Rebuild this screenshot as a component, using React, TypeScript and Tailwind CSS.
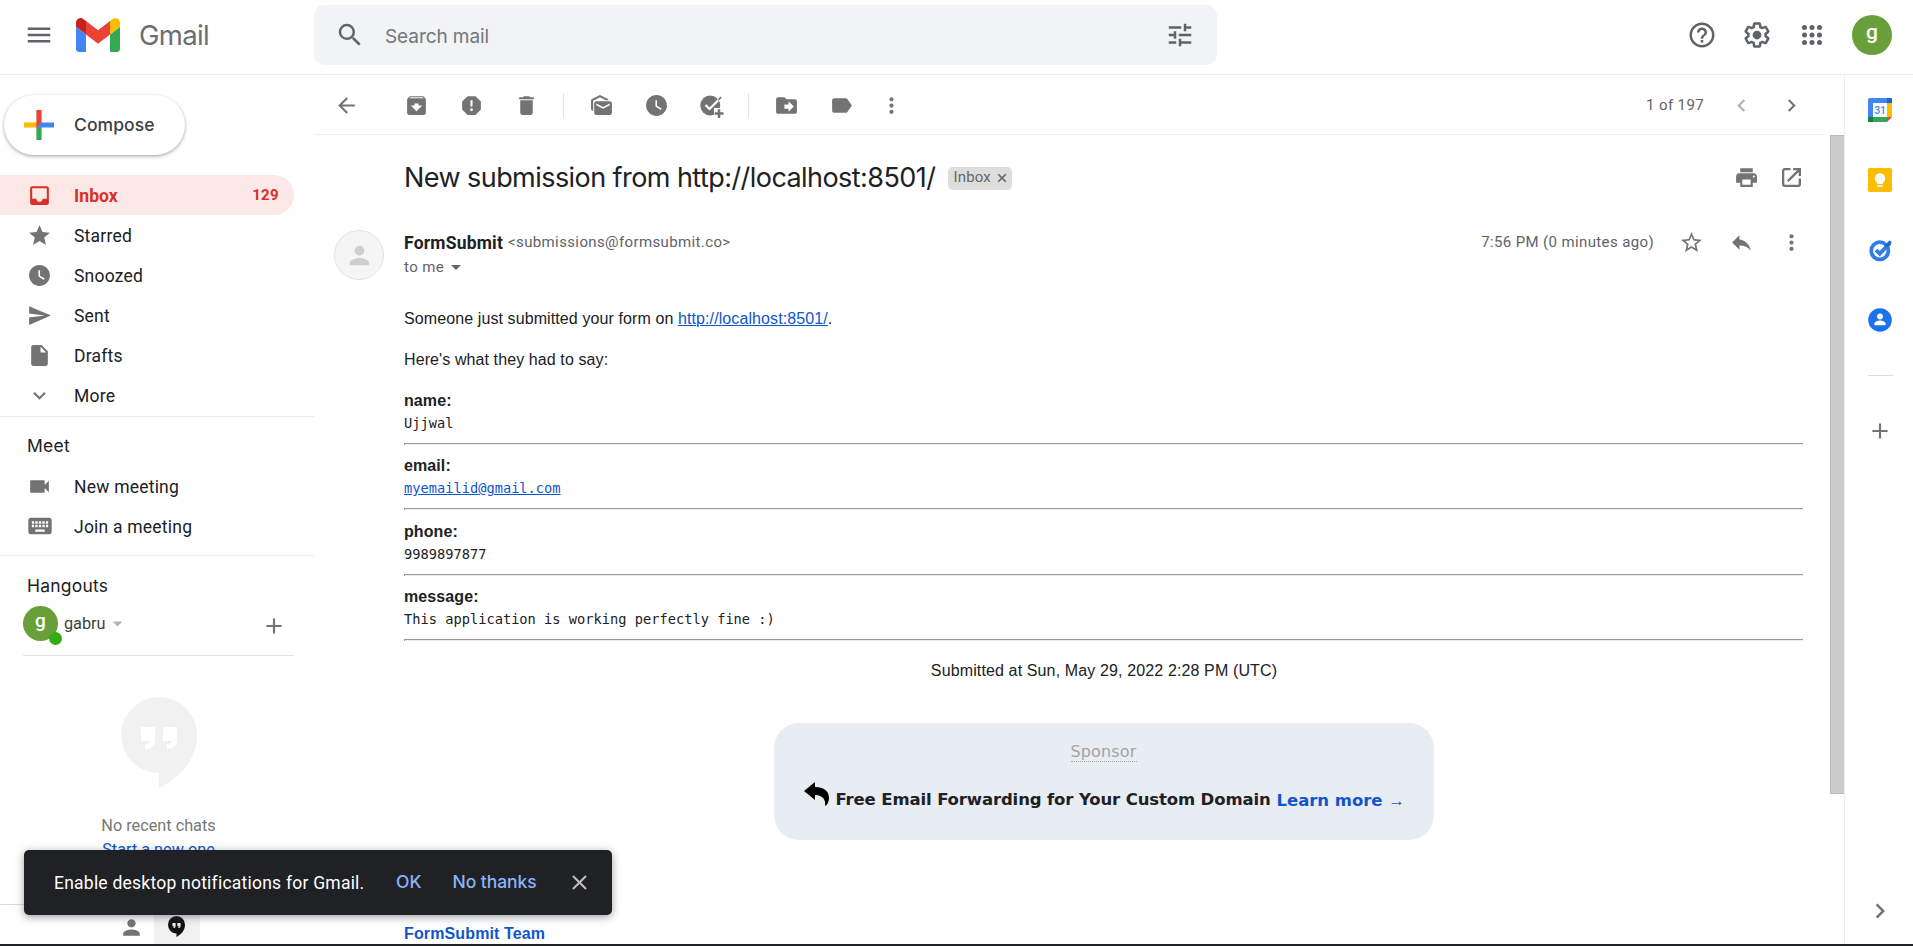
import type { ReactNode } from "react";
import type { IconType } from "react-icons";
import {
  MdAdd, MdArchive, MdArrowBack, MdArrowDropDown, MdChevronLeft, MdChevronRight, MdClose, MdDelete,
  MdDriveFileMove, MdExpandMore, MdHelpOutline, MdInbox, MdInsertDriveFile, MdKeyboard, MdLabel, MdMarkAsUnread,
  MdMenu, MdMoreVert, MdPerson, MdPrint, MdReply, MdReport, MdSearch, MdSend,
  MdStar, MdStarBorder, MdTune, MdVideocam, MdWatchLater,
} from "react-icons/md";

const RB = "font-['Roboto',sans-serif]";
const GS = "font-['Inter',sans-serif]";

function GmailLogo() {
  return (
    <svg width="44" height="34" viewBox="52 42 88 66" preserveAspectRatio="none">
      <path fill="#4285f4" d="M58 108h14V74L52 59v43c0 3.32 2.69 6 6 6" />
      <path fill="#34a853" d="M120 108h14c3.32 0 6-2.69 6-6V59l-20 15" />
      <path fill="#fbbc04" d="M120 48v26l20-15v-8c0-7.42-8.47-11.65-14.4-7.2" />
      <path fill="#ea4335" d="M72 74V48l24 18 24-18v26L96 92" />
      <path fill="#c5221f" d="M52 51v8l20 15V48l-5.6-4.2c-5.94-4.45-14.4-.22-14.4 7.2" />
    </svg>
  );
}

function SettingsIcon() {
  return (
    <svg width="30" height="30" viewBox="0 0 24 24" fill="currentColor">
      <path d="M13.85 22.25h-3.7c-.74 0-1.36-.54-1.45-1.27l-.27-1.89c-.27-.14-.53-.29-.79-.46l-1.8.72c-.7.26-1.47-.03-1.81-.65L2.2 15.53c-.35-.66-.2-1.44.36-1.88l1.53-1.19c-.01-.15-.02-.3-.02-.46 0-.15.01-.31.02-.46l-1.52-1.19c-.59-.45-.74-1.26-.37-1.88l1.85-3.19c.34-.62 1.11-.9 1.79-.63l1.81.73c.26-.17.52-.32.78-.46l.27-1.91c.09-.7.71-1.25 1.44-1.25h3.7c.74 0 1.36.54 1.45 1.27l.27 1.89c.27.14.53.29.79.46l1.8-.72c.71-.26 1.48.03 1.82.65l1.84 3.18c.36.66.2 1.44-.36 1.88l-1.52 1.19c.01.15.02.3.02.46s-.01.31-.02.46l1.52 1.19c.56.45.72 1.23.37 1.86l-1.86 3.22c-.34.62-1.11.9-1.8.63l-1.8-.72c-.26.17-.52.32-.78.46l-.27 1.91c-.1.68-.72 1.22-1.46 1.22zm-3.23-2h2.76l.37-2.55.53-.22c.44-.18.88-.44 1.34-.78l.45-.34 2.38.96 1.38-2.4-2.03-1.58.07-.56c.03-.26.06-.51.06-.78s-.03-.53-.06-.78l-.07-.56 2.03-1.58-1.39-2.4-2.39.96-.45-.35c-.42-.32-.87-.58-1.33-.77l-.52-.22-.37-2.55h-2.76l-.37 2.55-.53.21c-.44.19-.88.44-1.34.79l-.45.33-2.38-.95-1.39 2.39 2.03 1.58-.07.56a7 7 0 0 0-.06.79c0 .26.02.53.06.78l.07.56-2.03 1.58 1.38 2.4 2.39-.96.45.35c.43.33.86.58 1.33.77l.53.22z" />
      <circle cx="12" cy="12" r="3.5" />
    </svg>
  );
}

function AppsDots() {
  return (
    <svg width="30" height="30" viewBox="0 0 24 24" fill="currentColor">
      {[6, 12, 18].map((y) => [6, 12, 18].map((x) => <circle key={x + "-" + y} cx={x} cy={y} r="2" />))}
    </svg>
  );
}

function AddToTasks() {
  return (
    <svg width="25" height="25" viewBox="0 0 20 20">
      <circle cx="9" cy="10" r="8" fill="#737373" />
      <path d="M5.2 9.6l3.2 3.2L18 3.2" fill="none" stroke="#fff" strokeWidth="1.8" />
      <path d="M15.9 4.1l1.3-1.3 1 1-3 3z" fill="#737373" />
      <path d="M12 12h7v8h-7z" fill="#fff" />
      <path d="M15 13h2v2.4h2.6v2H17V20h-2v-2.6h-2.5v-2H15z" fill="#737373" />
    </svg>
  );
}

function OpenInNewWindow() {
  return (
    <svg width="19" height="19" viewBox="0 0 18 18" fill="none" stroke="currentColor" strokeWidth="2.2">
      <path d="M8 1.1H2.6A1.5 1.5 0 0 0 1.1 2.6v12.8a1.5 1.5 0 0 0 1.5 1.5h12.8a1.5 1.5 0 0 0 1.5-1.5V10" />
      <path d="M10.5 1.1h6.4v6.4M16.5 1.5l-11 11" />
    </svg>
  );
}

function ComposePlus() {
  return (
    <svg width="30" height="30" viewBox="0 0 30 30">
      <path fill="#ea4335" d="M12.4 0h5.2v12.4L12.4 17.6z" />
      <path fill="#34a853" d="M12.4 17.6l5.2-5.2V30h-5.2z" />
      <path fill="#fbbc04" d="M0 12.4h12.4v5.2H0z" />
      <path fill="#4285f4" d="M17.6 12.4H30v5.2H12.4z" />
      <path fill="#ea4335" d="M12.4 12.4h5.2l-5.2 5.2z" />
    </svg>
  );
}

function CalendarIcon() {
  return (
    <svg width="24" height="24" viewBox="0 0 24 24">
      <rect width="24" height="24" rx="1.5" fill="#4285f4" />
      <path d="M19 0h3.5A1.5 1.5 0 0 1 24 1.5V5h-5z" fill="#1967d2" />
      <path d="M19 5h5v14h-5z" fill="#fbbc04" />
      <path d="M5 19h14v5H5z" fill="#34a853" />
      <path d="M0 19h5v5H1.5A1.5 1.5 0 0 1 0 22.5z" fill="#188038" />
      <path d="M19 19h5v5h-5z" fill="#fff" />
      <path d="M19 19h5l-5 5z" fill="#ea4335" />
      <path d="M5 5h14v14H5z" fill="#fff" />
      <text x="12" y="15.8" textAnchor="middle" fontSize="10.5" fontFamily="Roboto, sans-serif" fontWeight="500" fill="#4285f4" letterSpacing="-0.3">31</text>
    </svg>
  );
}

function KeepIcon() {
  return (
    <svg width="24" height="24" viewBox="0 0 24 24">
      <rect width="24" height="24" rx="1.8" fill="#fbbc04" />
      <path fill="#fff" d="M12 5.2a5.2 5.2 0 0 0-2.8 9.6V16h5.6v-1.2A5.2 5.2 0 0 0 12 5.2zM9.4 17.2h5.2V19H9.4z" />
    </svg>
  );
}

function TasksIcon() {
  return (
    <svg width="24" height="24" viewBox="0 0 24 24">
      <circle cx="11.8" cy="12.8" r="8.6" fill="none" stroke="#2f7de9" strokeWidth="3.8" />
      <path d="M8 12l3.7 3.7L22 5.2" fill="none" stroke="#2f7de9" strokeWidth="3.8" />
      <path d="M16.2 7.8l4.3-4.4a1.5 1.5 0 0 1 2.4 0 1.6 1.6 0 0 1 0 2.4l-4 4z" fill="#2165cc" />
    </svg>
  );
}

function ContactsIcon() {
  return (
    <svg width="24" height="24" viewBox="0 0 24 24">
      <circle cx="12" cy="12" r="11.8" fill="#1a73e8" />
      <circle cx="12" cy="8.5" r="2.9" fill="#fff" />
      <path d="M6.3 15.6c0-2.2 3.6-3.2 5.7-3.2s5.7 1 5.7 3.2v.7c0 .6-.4 1-1 1H7.3c-.6 0-1-.4-1-1z" fill="#fff" />
    </svg>
  );
}

function HangoutsBubble({ width, height, color, quote }: { width: number; height: number; color: string; quote: string }) {
  return (
    <svg width={width} height={height} viewBox="0 0 76 91" preserveAspectRatio="none">
      <path fill={color} d="M38 0a38 38 0 0 1 38 38c0 22-14 41-38 53V76A38 38 0 0 1 38 0z" />
      <path fill={quote} d="M20 30h14v14c0 4.5-4 8-10 8v-5c3 0 5-1 5-3h-9zM42 30h14v14c0 4.5-4 8-10 8v-5c3 0 5-1 5-3h-9z" />
    </svg>
  );
}

function Slot({ w = "w-[55px]", className = "", children }: { w?: string; className?: string; children: ReactNode }) {
  return <span className={"flex shrink-0 items-center justify-center " + w + " " + className}>{children}</span>;
}

function NavItem({ icon: Icon, label, count, size = 25 }: { icon: IconType; label: string; count?: string; size?: number }) {
  const active = count !== undefined;
  return (
    <div className={"flex h-10 w-[294px] shrink-0 items-center rounded-r-full " + (active ? "bg-[#fce8e6] text-[#d93025]" : "text-[#202124]")}>
      <span className={"ml-[24px] flex w-[31px] justify-center " + (active ? "" : "text-[#737373]")}><Icon size={size} /></span>
      <span className={"ml-[19px] pt-[2px] text-[17.5px] " + (active ? "font-bold tracking-[0.1px]" : "tracking-[0.22px]")}>{label}</span>
      {active && <span className="mr-[15px] ml-auto text-[15px] font-bold tracking-[0.35px]">{count}</span>}
    </div>
  );
}

function Header() {
  return (
    <header className="flex h-[75px] shrink-0 border-b border-[#e8eaeb] pb-[4px] text-[#5f6368]">
      <div className="flex w-[314px] items-center">
        <span className="ml-[24px]"><MdMenu size={30} /></span>
        <span className="ml-[22px]"><GmailLogo /></span>
        <span className={GS + " mt-[2px] ml-[19px] text-[27.5px] tracking-[-0.7px] text-[#6b6f73]"}>Gmail</span>
      </div>
      <div className="mt-[5px] flex h-[60px] w-[903px] items-center rounded-[10px] bg-[#f1f3f4]">
        <span className="ml-[21px]"><MdSearch size={30} /></span>
        <span className={GS + " mt-[4px] ml-[20px] text-[19px] tracking-[-0.08px] text-[#72767a]"}>Search mail</span>
        <span className="mr-[22px] ml-auto"><MdTune size={30} /></span>
      </div>
      <div className="mr-[21px] ml-auto flex items-center">
        <Slot><MdHelpOutline size={30} /></Slot>
        <Slot><SettingsIcon /></Slot>
        <Slot><AppsDots /></Slot>
        <div className={RB + " ml-[13px] flex h-10 w-10 items-center justify-center rounded-full bg-[#689f38] pb-[5px] text-[21px] font-medium text-white"}>g</div>
      </div>
    </header>
  );
}

function Sidebar() {
  return (
    <aside className={RB + " flex w-[314px] shrink-0 flex-col overflow-hidden"}>
      <div className="mt-[20px] ml-[4px] flex h-[60px] w-[181px] shrink-0 items-center rounded-full bg-white shadow-[0_1px_3px_rgba(60,64,67,0.35),0_2px_4px_rgba(60,64,67,0.15)]">
        <span className="ml-[20px]"><ComposePlus /></span>
        <span className={GS + " ml-[20px] text-[17.5px] font-medium tracking-[0.08px] text-[#3c4043]"}>Compose</span>
      </div>
      <nav className="mt-[20px] flex h-[242px] shrink-0 flex-col border-b border-[#eceeef]">
        <NavItem icon={MdInbox} label="Inbox" count="129" />
        <NavItem icon={MdStar} label="Starred" />
        <NavItem icon={MdWatchLater} label="Snoozed" />
        <NavItem icon={MdSend} label="Sent" />
        <NavItem icon={MdInsertDriveFile} label="Drafts" />
        <NavItem icon={MdExpandMore} label="More" />
      </nav>
      <section className="flex h-[139px] shrink-0 flex-col border-b border-[#eceeef] pt-[9px]">
        <h2 className={GS + " ml-[27px] flex h-[40px] items-center text-[17.5px] tracking-[0.25px] text-[#202124]"}>Meet</h2>
        <NavItem icon={MdVideocam} label="New meeting" />
        <NavItem icon={MdKeyboard} label="Join a meeting" size={28} />
      </section>
      <h2 className={GS + " mt-[14px] ml-[27px] flex h-[32px] shrink-0 items-center text-[17.5px] tracking-[0.2px] text-[#202124]"}>Hangouts</h2>
      <div className="mr-[20px] ml-[23px] flex h-[54px] shrink-0 items-start border-b border-[#e4e4e4] pt-[4px]">
        <div className="relative flex h-[35px] w-[35px] items-center justify-center rounded-full bg-[#689f38] pb-[4px] text-[19px] font-medium text-white">
          g
          <span className="absolute right-[-4px] bottom-[-4px] h-[13px] w-[13px] rounded-full bg-[#33ac18]" />
        </div>
        <span className="ml-[6px] pt-[6px] text-[16.25px] leading-[24px] text-[#3c4043]">gabru</span>
        <span className="mt-[6px] text-[#b4b4b4]"><MdArrowDropDown size={23} /></span>
        <span className="mt-[7px] mr-[7px] ml-auto text-[#737373]"><MdAdd size={26} /></span>
      </div>
      <div className="mt-[41px] flex shrink-0 flex-col items-center pl-[3px] text-[16.25px]">
        <HangoutsBubble width={76} height={91} color="#f1f1f1" quote="#ffffff" />
        <span className="mt-[26px] leading-[24px] text-[#777]">No recent chats</span>
        <span className="leading-[24px] text-[#1155cc]">Start a new one</span>
      </div>
      <div className="mt-auto flex h-[40px] shrink-0 border-t border-[#dcdcdc] pl-[108px]">
        <span className="flex w-[46px] items-center justify-center pt-[5px] text-[#737373]"><MdPerson size={25} /></span>
        <span className="flex w-[46px] items-center justify-center bg-[#f1f1f1] pt-[4px] pr-[2px]"><HangoutsBubble width={17} height={21} color="#111111" quote="#f1f1f1" /></span>
      </div>
    </aside>
  );
}

function Toolbar() {
  return (
    <div className="mr-[19px] flex h-[60px] shrink-0 items-center border-b border-[#eceeef] pt-[2px] text-[#737373]">
      <Slot w="w-[64px]"><MdArrowBack size={25} /></Slot>
      <span className="w-[11px]" />
      <Slot><MdArchive size={25} /></Slot>
      <Slot><MdReport size={25} /></Slot>
      <Slot><MdDelete size={25} /></Slot>
      <span className="mx-[9px] h-[25px] w-px bg-[#e3e3e3]" />
      <Slot className="ml-px"><MdMarkAsUnread size={25} /></Slot>
      <Slot><MdWatchLater size={25} /></Slot>
      <Slot><AddToTasks /></Slot>
      <span className="mx-[9px] h-[25px] w-px bg-[#e3e3e3]" />
      <Slot className="ml-px"><MdDriveFileMove size={25} /></Slot>
      <Slot><MdLabel size={25} /></Slot>
      <Slot w="w-[45px]"><MdMoreVert size={25} /></Slot>
      <span className="mr-[12px] ml-auto text-[15px] tracking-[0.375px] text-[#5f6368]">1 of 197</span>
      <Slot w="w-[50px]" className="text-[#b0b0b0]"><MdChevronLeft size={25} /></Slot>
      <Slot w="w-[50px]" className="mr-[9px]"><MdChevronRight size={25} /></Slot>
    </div>
  );
}

function Field({ label, children }: { label: string; children: ReactNode }) {
  return (
    <div className="flex h-[65.5px] flex-col pt-[10.5px]">
      <div className="h-[22px] leading-[22px] font-bold tracking-[0.1px]">{label}</div>
      <div className="h-[24px] font-['DejaVu_Sans_Mono','Liberation_Mono',monospace] text-[13.7px] leading-[23.5px]">{children}</div>
      <div className="mt-[7px] h-[2px] border-t border-l border-[#9a9a9a]"><div className="h-px bg-[#eeeeee]" /></div>
    </div>
  );
}

function Message() {
  return (
    <div className="flex grow flex-col text-[#202124]">
      <div className="flex h-[86px] shrink-0 items-center pr-[16px] pl-[90px]">
        <h1 className={GS + " text-[27px] font-[370] tracking-[-0.56px]"}>New submission from http://localhost:8501/</h1>
        <span className="ml-[13px] flex h-[23px] w-[64px] items-center rounded-[5px] bg-[#dddddd] pl-[5px] text-[15px] text-[#666666]">
          <span className="-mt-px tracking-[0.2px]">Inbox</span>
          <span className="-mt-px ml-[4px]"><MdClose size={14} strokeWidth={0} className="[&_path:last-child]:stroke-current [&_path:last-child]:stroke-1" /></span>
        </span>
        <span className="-mt-px ml-auto flex text-[#737373]">
          <Slot w="w-[45px]"><MdPrint size={25} /></Slot>
          <Slot w="w-[45px]"><OpenInNewWindow /></Slot>
        </span>
      </div>
      <div className="flex h-[77px] shrink-0 items-start pt-[9px] pr-[16px]">
        <div className="ml-[20px] flex h-[50px] w-[50px] items-center justify-center rounded-full border border-[#e2e2e2] bg-[#f5f5f5] text-[#cfcfcf]"><MdPerson size={29} /></div>
        <div className="ml-[20px] text-[15px] tracking-[0.375px] text-[#5f6368]">
          <div className="flex h-[25px] items-center">
            <span className="mr-[5px] pt-[1px] text-[17.5px] font-bold tracking-[0.2px] text-[#202124]">FormSubmit</span>
            <span>&lt;submissions@formsubmit.co&gt;</span>
          </div>
          <div className="flex h-[24px] items-center"><span>to me</span><MdArrowDropDown size={24} /></div>
        </div>
        <span className="ml-auto flex h-[25px] items-center text-[#737373]">
          <span className="mr-[12px] text-[15px] tracking-[0.375px] text-[#5f6368]">7:56 PM (0 minutes ago)</span>
          <Slot w="w-[50px]"><MdStarBorder size={25} /></Slot>
          <Slot w="w-[50px]"><MdReply size={25} /></Slot>
          <Slot w="w-[48px]" className="pl-[2px]"><MdMoreVert size={25} /></Slot>
        </span>
      </div>
      <div className="mr-[27px] ml-[90px] flex flex-col font-['Liberation_Sans',Arial,sans-serif] text-[16px] tracking-[0.1px]">
        <p className="mt-[9px] leading-[24px]">Someone just submitted your form on <a className="text-[#1155cc] underline">http://localhost:8501/</a>.</p>
        <p className="mt-[17px] mb-[7px] leading-[24px]">Here's what they had to say:</p>
        <div className="tracking-normal">
          <Field label="name:">Ujjwal</Field>
          <Field label="email:"><a className="text-[#1155cc] underline">myemailid@gmail.com</a></Field>
          <Field label="phone:">9989897877</Field>
          <Field label="message:">This application is working perfectly fine :)</Field>
        </div>
        <p className="mt-[18px] pl-[1px] text-center leading-[24px] tracking-[0.13px]">Submitted at Sun, May 29, 2022 2:28 PM (UTC)</p>
        <div className="mt-[40px] flex h-[117px] w-[660px] flex-col items-center self-center rounded-[25px] bg-[#e8ecf3] pt-[19px] font-['DejaVu_Sans',sans-serif] tracking-normal">
          <span className="border-b border-dotted border-[#aaaaaa] text-[16px] leading-[19px] tracking-[0.15px] text-[#a4a4a4]">Sponsor</span>
          <div className="mt-[20px] flex items-center pl-[2px] text-[16.5px] leading-[26px] font-bold whitespace-nowrap">
            <svg className="mr-[6px] mb-[12px]" width="25" height="24" viewBox="0 0 25 24"><path d="M0 9L11 0v5c9 0 14 4 14 11 0 4-2 7-4 8 1-6-2-11-10-11v5z" fill="#000" /></svg>
            <span className="tracking-[-0.13px]">Free Email Forwarding for Your Custom Domain</span>
            <span className="ml-[6px] tracking-[-0.05px] text-[#1155cc]">Learn more <span className="font-['Liberation_Sans',sans-serif] font-normal">→</span></span>
          </div>
        </div>
        <p className="mt-[82px] leading-[24px] font-bold tracking-[0.13px] text-[#1155cc]">FormSubmit Team</p>
      </div>
    </div>
  );
}

function Toast() {
  return (
    <div className={RB + " absolute top-[850px] left-[24px] flex h-[65px] w-[588px] items-center rounded-[5px] bg-[#202124] text-[17.5px] text-white shadow-[0_2px_8px_rgba(60,64,67,0.5)]"}>
      <span className="ml-[30px] w-[310px] pt-[1px] font-[450] tracking-[0.23px] whitespace-nowrap">Enable desktop notifications for Gmail.</span>
      <span className={GS + " ml-[32px] font-medium text-[#8ab4f8]"}>OK</span>
      <span className={GS + " ml-[31px] font-medium tracking-[-0.05px] text-[#8ab4f8]"}>No thanks</span>
      <span className="mr-[20px] ml-auto text-[#bdbdbd]"><MdClose size={25} /></span>
    </div>
  );
}

function Rail() {
  return (
    <aside className="flex w-[69px] shrink-0 flex-col items-center border-l border-[#eceeef] pl-[2px] text-[#737373]">
      <div className="mt-[23px] flex flex-col gap-[46px]"><CalendarIcon /><KeepIcon /><TasksIcon /><ContactsIcon /></div>
      <div className="mt-[43px] h-px w-[25px] bg-[#dadce0]" />
      <MdAdd className="mt-[42px]" size={26} />
      <MdChevronRight className="mt-auto mb-[18px]" size={30} />
    </aside>
  );
}

export default function App() {
  return (
    <div className="relative flex h-[946px] w-[1913px] flex-col overflow-hidden border-b-2 border-[#202124] bg-white">
      <Header />
      <div className="flex min-h-0 grow">
        <Sidebar />
        <main className={RB + " flex min-w-0 grow flex-col overflow-hidden"}>
          <Toolbar />
          <div className="flex min-h-0 grow">
            <Message />
            <div className="h-[659px] w-[14px] border border-r-0 border-[#bcbcbc] bg-[#cbcbcb]" />
          </div>
        </main>
        <Rail />
      </div>
      <Toast />
    </div>
  );
}
